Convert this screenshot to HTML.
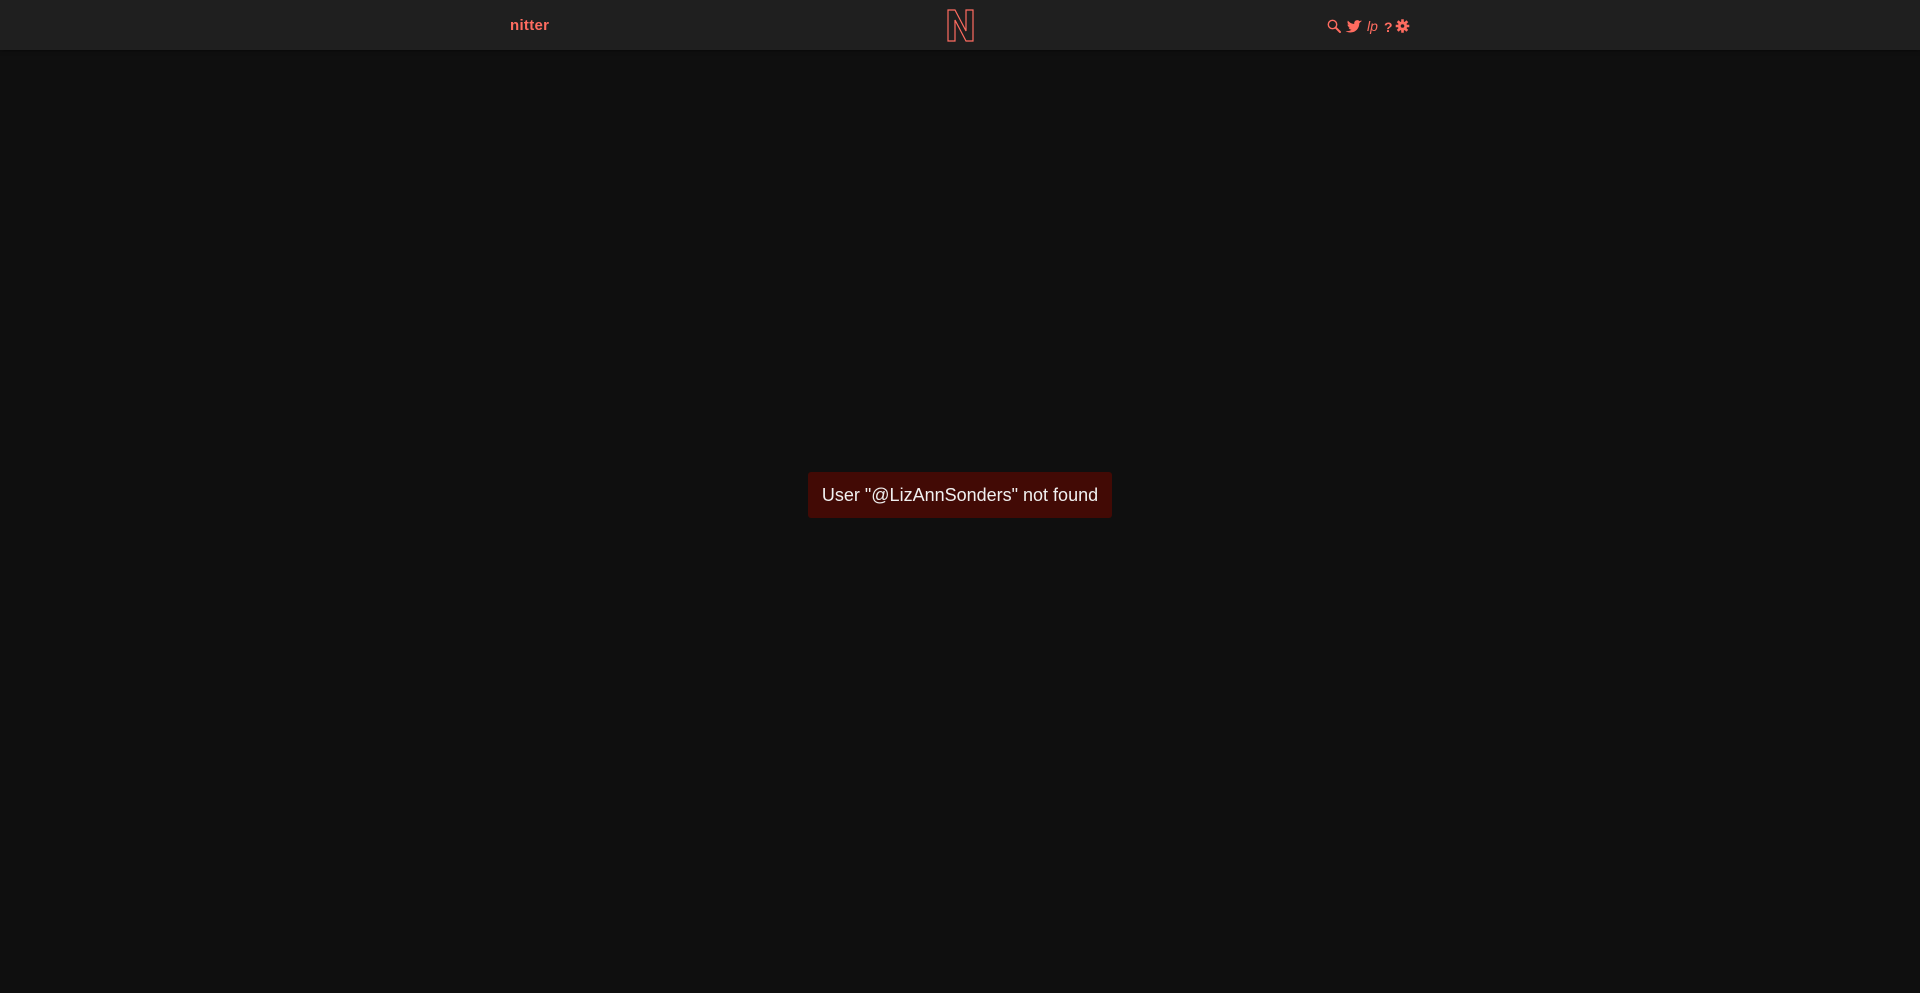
<!DOCTYPE html>
<html><head><meta charset="utf-8"><style>
html,body{margin:0;padding:0;width:1920px;height:993px;background:#0f0f0f;overflow:hidden;font-family:"Liberation Sans",sans-serif}
nav{position:absolute;left:0;top:0;width:1920px;height:50px;background:#1f1f1f;box-shadow:0 0 4px rgba(0,0,0,.6)}
.brand{position:absolute;left:510px;top:17px;color:#ff6c60;font-weight:bold;font-size:15px;letter-spacing:0.3px}
.logo{position:absolute;left:947px;top:9px}
.icons{position:absolute;left:1327px;top:18px;height:16px}
.err{position:absolute;left:808px;top:472px;width:304px;height:46px;background:#420a05;border-radius:3px;color:#f0f0f0;font-size:18px;line-height:46px;text-align:center}
</style></head><body>
<nav>
<div class="brand">nitter</div>
<svg class="logo" width="27" height="33" viewBox="0 0 27 33"><path d="M1 1H8L19 22V1H26V32H19L8 11V32H1Z" fill="none" stroke="#ff6c60" stroke-width="1.2" stroke-linejoin="miter"/></svg>
<svg class="icons" width="90" height="16" viewBox="0 0 90 16" fill="#ff6c60">
<circle cx="5.5" cy="6.5" r="4.2" fill="none" stroke="#ff6c60" stroke-width="1.4"/><path d="M8.6 9.6L13 14" stroke="#ff6c60" stroke-width="2" stroke-linecap="round"/>
<path d="M35 3.5c-.6.3-1.2.4-1.8.5.7-.4 1.1-1 1.4-1.7-.6.4-1.3.6-2 .8-.6-.6-1.4-1-2.3-1-1.7 0-3.1 1.4-3.1 3.1 0 .2 0 .5.1.7-2.6-.1-4.9-1.4-6.4-3.3-.3.5-.4 1-.4 1.6 0 1.1.6 2 1.4 2.6-.5 0-1-.2-1.4-.4 0 1.5 1.1 2.8 2.5 3.1-.5.1-1 .2-1.4.1.4 1.2 1.6 2.2 2.9 2.2-1.1.8-2.4 1.3-3.9 1.3H18.6c1.4.9 3 1.4 4.8 1.4 5.7 0 8.9-4.8 8.9-8.9v-.4c.6-.5 1.1-1 1.5-1.7z"/>
<text x="40" y="13" font-family="Liberation Sans" font-style="italic" font-size="14">lp</text>
<text x="57" y="14" font-family="Liberation Sans" font-weight="bold" font-size="14">?</text>
<g transform="translate(75.5,8)"><circle r="4.6"/><g stroke="#ff6c60" stroke-width="2.6"><path d="M0-6.8V6.8M-6.8 0H6.8M-4.8-4.8L4.8 4.8M-4.8 4.8L4.8-4.8"/></g><circle r="1.8" fill="#1f1f1f"/></g>
</svg>
</nav>
<div class="err">User "@LizAnnSonders" not found</div>
</body></html>
